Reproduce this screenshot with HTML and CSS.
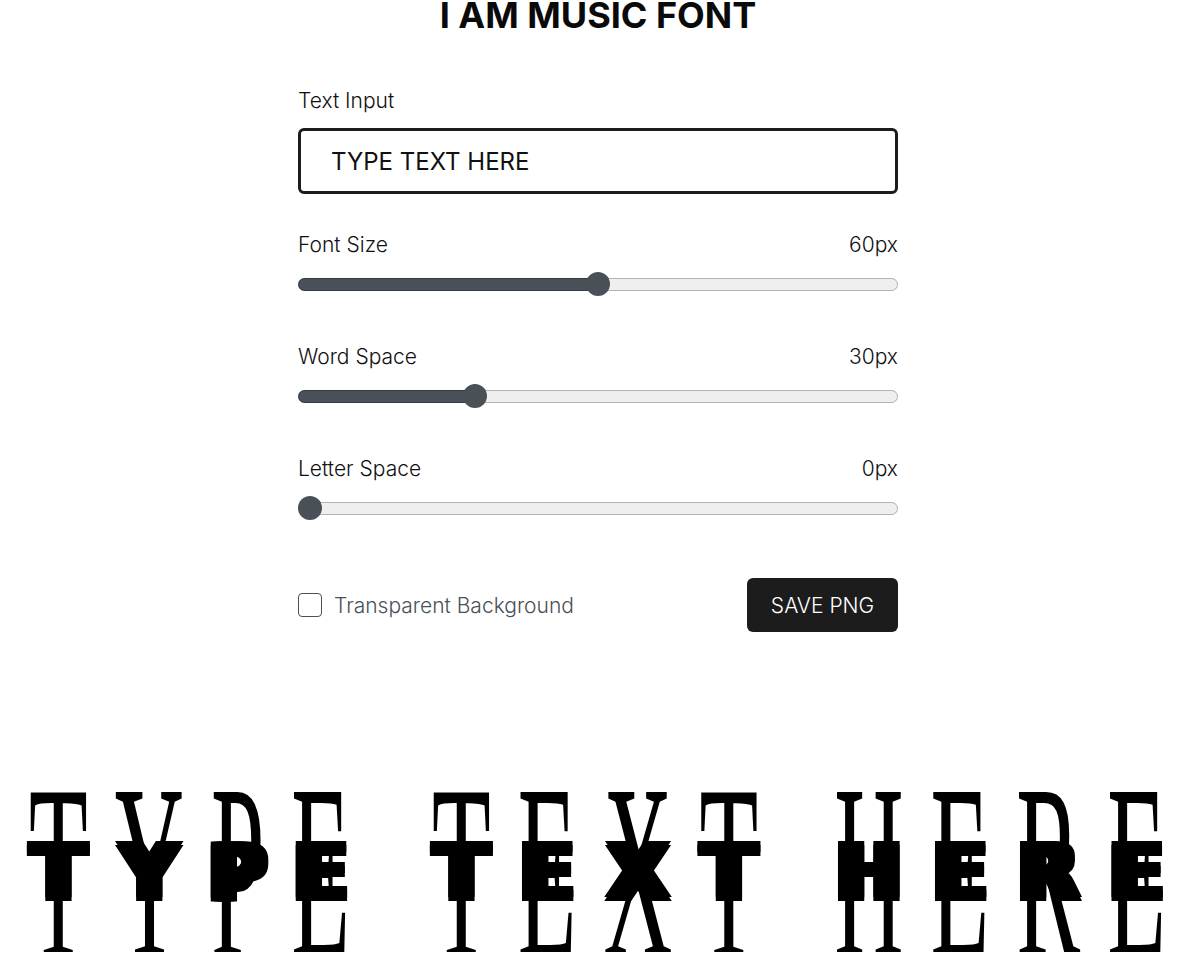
FILE: index.html
```html
<!DOCTYPE html>
<html lang="en">
<head>
  <meta charset="UTF-8">
  <meta name="viewport" content="width=device-width, initial-scale=1.0">
  <title>I Am Music Font</title>
  <link rel="stylesheet" href="styles.css">
</head>
<body>
  <h1>I AM MUSIC FONT</h1>

  <div class="controls">
    <div class="field field-text">
      <label for="text-input">Text Input</label>
      <input id="text-input" class="text-input" type="text" value="TYPE TEXT HERE">
    </div>

    <div class="field">
      <div class="field-head"><label for="font-size">Font Size</label><span>60px</span></div>
      <input id="font-size" class="slider" type="range" min="10" max="110" value="60" style="--fill: 50%">
    </div>

    <div class="field">
      <div class="field-head"><label for="word-space">Word Space</label><span>30px</span></div>
      <input id="word-space" class="slider" type="range" min="0" max="105" value="30" style="--fill: 29.5%">
    </div>

    <div class="field">
      <div class="field-head"><label for="letter-space">Letter Space</label><span>0px</span></div>
      <input id="letter-space" class="slider" type="range" min="0" max="100" value="0" style="--fill: 0%">
    </div>

    <div class="actions">
      <label class="check">
        <input type="checkbox">
        <span>Transparent Background</span>
      </label>
      <button class="save-button">SAVE PNG</button>
    </div>
  </div>

  <div class="preview">
    <div class="word">
      <span class="glyph"><span class="tall">T</span><span class="band">T</span></span>
      <span class="glyph"><span class="tall">Y</span><span class="band">Y</span></span>
      <span class="glyph"><span class="tall">P</span><span class="band">P</span></span>
      <span class="glyph"><span class="tall">E</span><span class="band">E</span></span>
    </div>
    <div class="word">
      <span class="glyph"><span class="tall">T</span><span class="band">T</span></span>
      <span class="glyph"><span class="tall">E</span><span class="band">E</span></span>
      <span class="glyph"><span class="tall">X</span><span class="band">X</span></span>
      <span class="glyph"><span class="tall">T</span><span class="band">T</span></span>
    </div>
    <div class="word word-last">
      <span class="glyph"><span class="tall">H</span><span class="band">H</span></span>
      <span class="glyph"><span class="tall">E</span><span class="band">E</span></span>
      <span class="glyph"><span class="tall">R</span><span class="band">R</span></span>
      <span class="glyph"><span class="tall">E</span><span class="band">E</span></span>
    </div>
  </div>
</body>
</html>
```

FILE: styles.css
```css
html {
  overflow: hidden;
}

body {
  margin: -9px 0 0;
  width: 1196px;
  background: #fff;
  color: #111;
  font-family: 'Inter', sans-serif;
}

h1 {
  margin: 0;
  font-size: 36px;
  line-height: 48px;
  font-weight: 700;
  text-align: center;
  color: #0a0a0a;
}

.controls {
  width: 600px;
  margin: 48px auto 0;
}

.field {
  margin-bottom: 47px;
}

.field-text {
  margin-bottom: 37px;
}

.field label,
.field-head span {
  font-size: 21px;
  line-height: 28px;
  font-weight: 300;
}

.field-text label {
  display: block;
  margin-bottom: 13px;
}

.field-head {
  display: flex;
  justify-content: space-between;
  margin-bottom: 13px;
}

.text-input {
  display: block;
  box-sizing: border-box;
  width: 100%;
  height: 66px;
  padding: 0 30px;
  border: 3px solid #1c1c1c;
  border-radius: 6px;
  outline: none;
  font-family: inherit;
  font-size: 24px;
  font-weight: 400;
  color: #111;
}

.slider {
  display: block;
  width: 100%;
  height: 24px;
  margin: 0;
  background: transparent;
  appearance: none;
  -webkit-appearance: none;
}

.slider::-webkit-slider-runnable-track {
  height: 13px;
  border-radius: 7px;
  box-shadow: inset 0 0 0 1px rgba(0, 0, 0, 0.25);
  background: linear-gradient(to right, #495057 var(--fill), #efefef var(--fill));
}

.slider::-webkit-slider-thumb {
  -webkit-appearance: none;
  width: 24px;
  height: 24px;
  margin-top: -5.5px;
  border-radius: 50%;
  background: #495057;
}

.actions {
  display: flex;
  justify-content: space-between;
  align-items: center;
  margin-top: 58px;
}

.check {
  display: flex;
  align-items: center;
  gap: 12px;
  font-size: 21px;
  font-weight: 300;
  color: #495057;
}

.check input {
  appearance: none;
  -webkit-appearance: none;
  box-sizing: border-box;
  width: 24px;
  height: 24px;
  margin: 0;
  border: 1.5px solid #495057;
  border-radius: 4px;
  background: #fff;
}

.save-button {
  width: 151px;
  height: 54px;
  border: none;
  border-radius: 6px;
  background: #1c1c1c;
  color: #fff;
  font-family: inherit;
  font-size: 21px;
  font-weight: 300;
}

.preview {
  display: flex;
  gap: 82px;
  margin: 158px 0 0 29px;
  height: 162px;
}

.word {
  display: flex;
  gap: 27px;
}

.word-last {
  margin-left: -6px;
}

.glyph {
  position: relative;
  display: block;
  height: 162px;
}

.tall {
  display: block;
  font-family: 'Liberation Serif', serif;
  font-size: 96px;
  line-height: 64px;
  color: #000;
  transform: scaleY(2.6);
  transform-origin: 50% 0;
}

/* heavy middle strip, thickened with hard shadows so the corners stay square */
.band {
  position: absolute;
  left: 50%;
  top: 54px;
  font-family: 'DejaVu Sans', sans-serif;
  font-weight: 700;
  font-size: 76px;
  line-height: 58px;
  color: #000;
  text-shadow:
    0 2px #000, 0 -2px #000,
    3px 2px #000, 3px -2px #000, -3px 2px #000, -3px -2px #000,
    6px 2px #000, 6px -2px #000, -6px 2px #000, -6px -2px #000;
  transform: translateX(-50%);
}
```
